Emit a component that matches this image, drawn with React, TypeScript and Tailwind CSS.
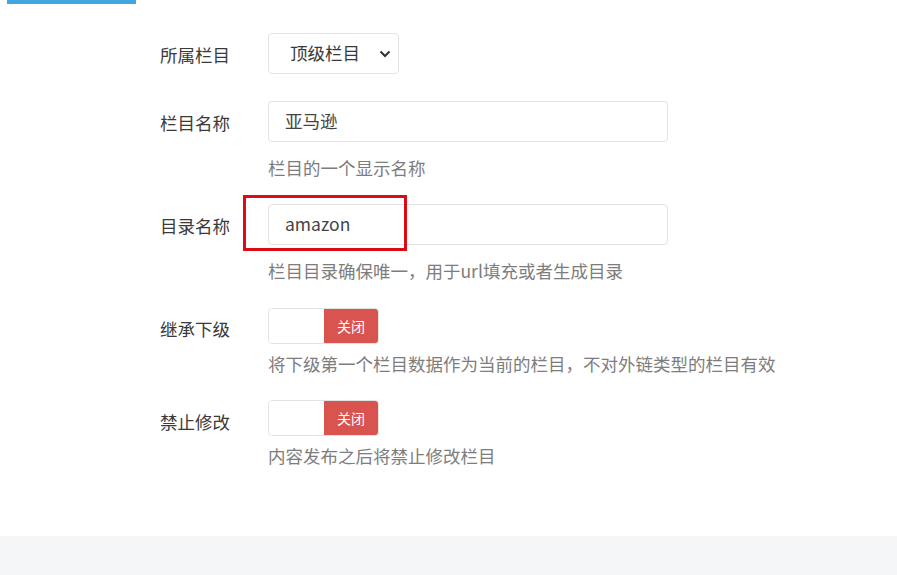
import React from "react"

const font = { fontFamily: '"Noto Sans CJK SC", "Noto Sans", sans-serif' }

const Switch = () => (
  <div className="flex h-[36px] w-[111px] rounded-[4px] border border-[#e3e3e3] overflow-hidden">
    <div className="w-[55px] bg-white"></div>
    <div className="flex-1 bg-[#d9534f] text-white text-[14px] flex items-center justify-center">关闭</div>
  </div>
)

const Row = ({ label, children, help, mb }: { label: string; children: React.ReactNode; help?: string; mb: string }) => (
  <div className={`flex ${mb}`}>
    <div className="w-[108px] shrink-0 pt-[8px] text-[17.5px] leading-[27px] text-[#3a3a3a]">{label}</div>
    <div className="flex flex-col">
      {children}
      {help && <div className="text-[17.5px] leading-[27px] text-[#7d7d7d]">{help}</div>}
    </div>
  </div>
)

export default function App() {
  return (
    <div className="w-[897px] h-[575px] bg-white flex flex-col overflow-hidden" style={font}>
      <div className="h-[4px] w-[129px] ml-[7px] bg-[#41a6de]"></div>
      <div className="flex-1 pl-[160px] pt-[29px]">
        <Row label="所属栏目" mb="mb-[27px]">
          <div className="flex h-[41px] w-[131px] items-center justify-between rounded-[4px] border border-[#e3e3e3] pl-[21px] pr-[7px] text-[17.5px] text-[#3a3a3a]">
            <span>顶级栏目</span>
            <svg width="12" height="8" viewBox="0 0 12 8" fill="none" stroke="#333" strokeWidth="2"><path d="M1.5 1.5 6 6l4.5-4.5" /></svg>
          </div>
        </Row>
        <Row label="栏目名称" help="栏目的一个显示名称" mb="mb-[23px]">
          <div className="flex h-[41px] w-[400px] items-center rounded-[4px] border border-[#e3e3e3] px-[16px] text-[17.5px] text-[#444] mb-[12px]">亚马逊</div>
        </Row>
        <div className="relative">
          <Row label="目录名称" help="栏目目录确保唯一，用于url填充或者生成目录" mb="mb-[23px]">
            <div className="flex h-[41px] w-[400px] items-center rounded-[4px] border border-[#e3e3e3] px-[16px] text-[17.5px] text-[#444] mb-[12px]">amazon</div>
          </Row>
          <div className="absolute left-[83px] top-[-9px] h-[56px] w-[164px] border-[3px] border-[#dd0a13]"></div>
        </div>
        <Row label="继承下级" help="将下级第一个栏目数据作为当前的栏目，不对外链类型的栏目有效" mb="mb-[23px]">
          <div className="mb-[6px] mt-[1px]"><Switch /></div>
        </Row>
        <Row label="禁止修改" help="内容发布之后将禁止修改栏目" mb="mb-0">
          <div className="mb-[6px]"><Switch /></div>
        </Row>
      </div>
      <div className="h-[39px] bg-[#f5f6f8]"></div>
    </div>
  )
}
